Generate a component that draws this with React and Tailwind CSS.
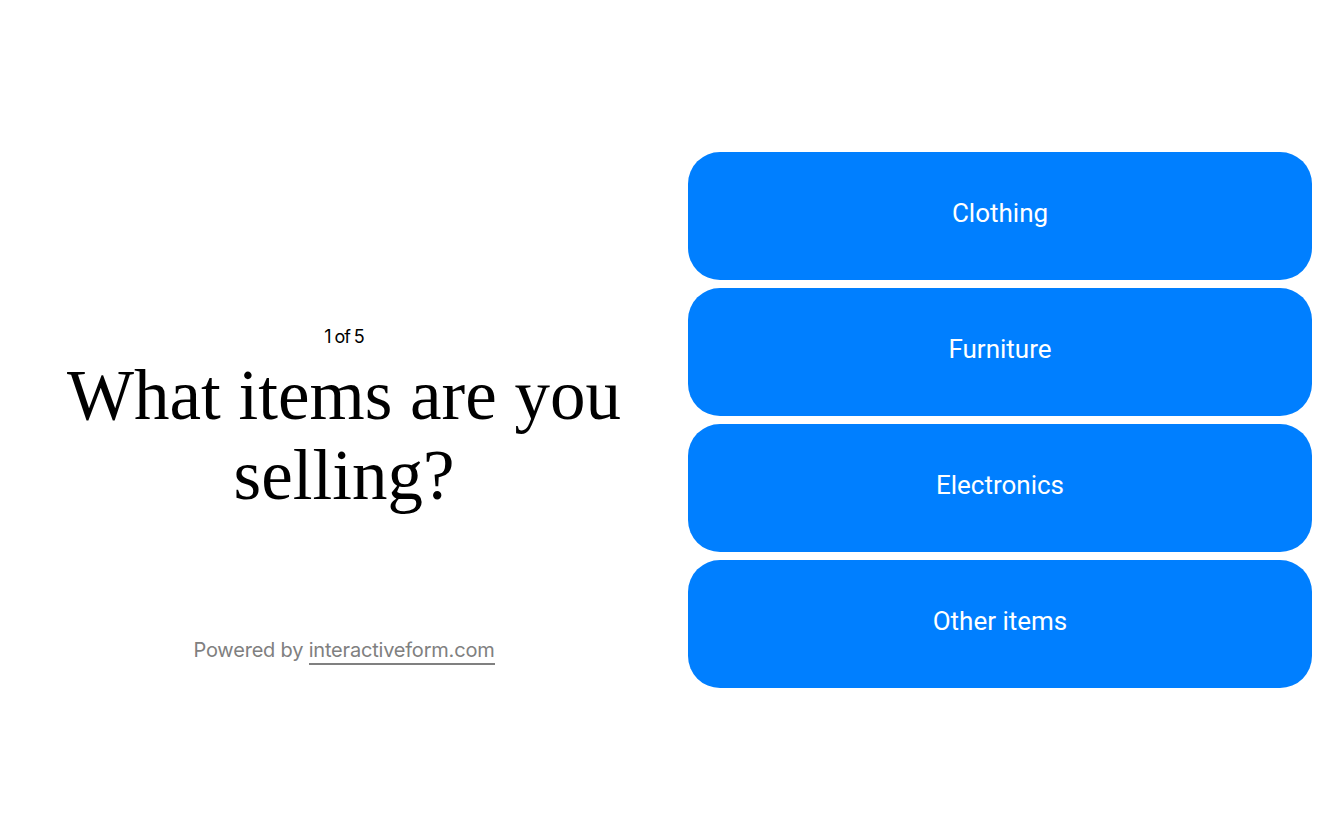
import React from 'react';

const choices = ['Clothing', 'Furniture', 'Electronics', 'Other items'];

// Render the first question of the form with its answer buttons.
function App() {
  return (
    <div className="min-h-screen bg-white flex items-center">
      <div className="w-full grid grid-cols-2 gap-8 px-8">
        <div className="grid grid-rows-[1fr_auto_1fr] text-center">
          <div />
          <div>
            <p className="text-[18px] leading-6 tracking-[-0.06em] text-black font-['Inter',sans-serif]">
              1 of 5
            </p>
            <h1 className="mt-[6px] text-[71px] leading-[80px] text-black font-['Liberation_Serif',serif]">
              What items are you selling?
            </h1>
          </div>
          <div className="flex items-end justify-center pb-[26px]">
            <p className="text-[20px] leading-6 tracking-[-0.01em] text-[#808080] font-['Inter',sans-serif]">
              Powered by{' '}
              <a href="#" className="border-b-2 border-[#808080] pb-px">
                interactiveform.com
              </a>
            </p>
          </div>
        </div>
        <div className="flex flex-col gap-2">
          {choices.map((choice) => (
            <button
              key={choice}
              type="button"
              className="h-32 pb-[6px] rounded-[32px] bg-[#007fff] text-white text-[26px] font-['Roboto',sans-serif]"
            >
              {choice}
            </button>
          ))}
        </div>
      </div>
    </div>
  );
}

export default App;
